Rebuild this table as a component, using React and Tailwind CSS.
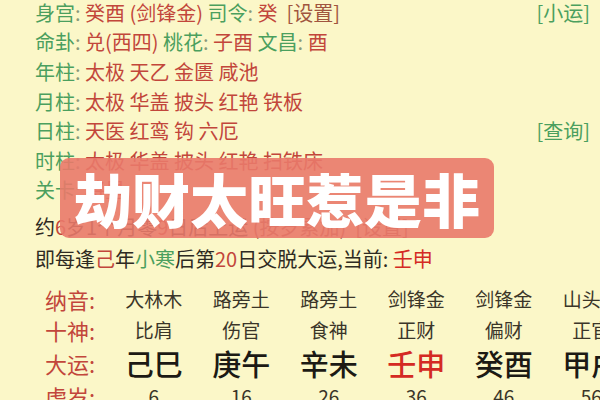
const G = 'text-[#4b9f5e]'
const R = 'text-[#c2463b]'

const font = { fontFamily: '"Noto Sans CJK SC", "Noto Sans", sans-serif' }

function Line({ children, right, className = '' }) {
  return (
    <div className={`flex h-[29.6px] items-center justify-between pr-[10px] ${className}`}>
      <div className="whitespace-nowrap">{children}</div>
      {right}
    </div>
  )
}

const cols = [
  { ny: '大林木', ss: '比肩', dy: '己巳', age: 6 },
  { ny: '路旁土', ss: '伤官', dy: '庚午', age: 16 },
  { ny: '路旁土', ss: '食神', dy: '辛未', age: 26 },
  { ny: '剑锋金', ss: '正财', dy: '壬申', age: 36, cur: true },
  { ny: '剑锋金', ss: '偏财', dy: '癸酉', age: 46 },
  { ny: '山头火', ss: '正官', dy: '甲戌', age: 56 },
]

export default function App() {
  return (
    <div className="relative h-[400px] w-[600px] overflow-hidden bg-[#fbf7c8] text-[20px]" style={font}>
      <div className="-mt-[2px] pl-[35px]">
        <Line right={<span className={G}>[小运]</span>}>
          <span className={G}>身宫</span><span className="text-[#8a9a7a]">: </span>
          <span className={R}>癸酉 (剑锋金)</span> <span className={G}>司令</span>
          <span className="text-[#8a9a7a]">: </span><span className={R}>癸</span>
          <span className="text-[#a0553f]">&nbsp; [设置]</span>
        </Line>
        <Line>
          <span className={G}>命卦</span><span className="text-[#8a9a7a]">: </span>
          <span className={R}>兑(西四)</span> <span className={G}>桃花</span>
          <span className="text-[#8a9a7a]">: </span><span className={R}>子酉</span>{' '}
          <span className={G}>文昌</span><span className="text-[#8a9a7a]">: </span>
          <span className={R}>酉</span>
        </Line>
        <Line>
          <span className={G}>年柱</span><span className="text-[#8a9a7a]">: </span>
          <span className={R}>太极 天乙 金匮 咸池</span>
        </Line>
        <Line>
          <span className={G}>月柱</span><span className="text-[#8a9a7a]">: </span>
          <span className={R}>太极 华盖 披头 红艳 铁板</span>
        </Line>
        <Line right={<span className={G}>[查询]</span>}>
          <span className={G}>日柱</span><span className="text-[#8a9a7a]">: </span>
          <span className={R}>天医 红鸾 钩 六厄</span>
        </Line>
        <Line>
          <span className={G}>时柱</span><span className="text-[#8a9a7a]">: </span>
          <span className={R}>太极 华盖 披头 红艳 扫铁床</span>
        </Line>
        <Line>
          <span className={G}>关卡</span><span className="text-[#8a9a7a]">: </span>
          <span className={R}>将星</span>
        </Line>
        <Line className="mt-[7px] text-[#2e2a22]">
          约<span className={R}>6</span>岁1个月零<span className={R}>9</span>日后上运{' '}
          <span className="text-[#a0553f]">(按岁累加)&nbsp; [设置]</span>
        </Line>
        <Line className="mt-[2px] text-[#2e2a22]">
          即每逢<span className={R}>己</span>年<span className={G}>小寒</span>后第
          <span className={R}>20</span>日交脱大运,当前: <span className="text-[#d42a23]">壬申</span>
        </Line>
      </div>

      <div className="mt-[11px] flex pl-[45px]">
        <div className="flex w-[65px] shrink-0 flex-col text-[22px] text-[#c2463b]">
          <div className="flex h-[30px] items-center">纳音:</div>
          <div className="flex h-[32px] items-center">十神:</div>
          <div className="flex h-[35px] items-center">大运:</div>
          <div className="flex h-[30px] items-center">虚岁:</div>
        </div>
        {cols.map((c) => (
          <div key={c.dy} className="flex w-[87.5px] shrink-0 flex-col items-center whitespace-nowrap">
            <div className="flex h-[30px] items-center text-[19px] text-[#3a3528]">{c.ny}</div>
            <div className="flex h-[32px] items-center text-[19px] text-[#3a3528]">{c.ss}</div>
            <div
              className={`flex h-[35px] items-center text-[29px] font-medium ${
                c.cur ? 'text-[#d42a23]' : 'text-[#1c1a14]'
              }`}
            >
              {c.dy}
            </div>
            <div className="flex h-[30px] items-center text-[19px] text-[#3a3528]">{c.age}</div>
          </div>
        ))}
      </div>

      <div className="absolute left-[60px] top-[158px] flex h-[80px] w-[434px] items-center justify-center rounded-[9px] bg-[#e9796a]/90">
        <span className="text-[58px] font-black leading-none text-white">劫财太旺惹是非</span>
      </div>
    </div>
  )
}
